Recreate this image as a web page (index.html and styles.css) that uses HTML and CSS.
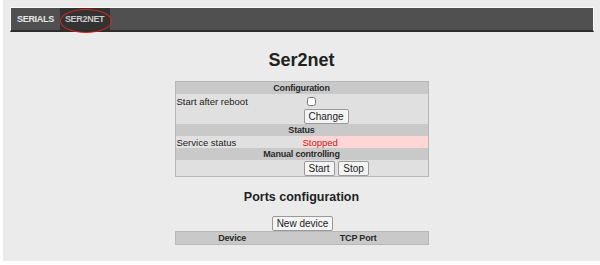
FILE: index.html
```html
<!DOCTYPE html>
<html lang="en">
<head>
    <meta charset="UTF-8">
    <title>Ser2net</title>
    <link rel="stylesheet" href="styles.css">
</head>
<body>
    <div class="page">
        <div class="menu">
            <a class="tab">SERIALS</a>
            <a class="tab active">SER2NET</a>
        </div>

        <h1>Ser2net</h1>
        <table class="grid">
            <tr><th colspan="2">Configuration</th></tr>
            <tr class="tall"><td class="label">Start after reboot</td><td><input type="checkbox" class="check"></td></tr>
            <tr><td></td><td><button>Change</button></td></tr>
            <tr><th colspan="2">Status</th></tr>
            <tr><td class="label">Service status</td><td class="stopped">Stopped</td></tr>
            <tr><th colspan="2">Manual controlling</th></tr>
            <tr><td></td><td><button>Start</button> <button>Stop</button></td></tr>
        </table>

        <h2>Ports configuration</h2>
        <div class="actions"><button>New device</button></div>
        <table class="grid ports">
            <tr><th class="dev">Device</th><th>TCP Port</th></tr>
        </table>
    </div>
</body>
</html>
```

FILE: styles.css
```css
body { margin: 0; background-color: #fff; font-family: "Liberation Sans", Arial, sans-serif; color: #222; }
.page { margin-left: 3px; height: 261px; background-color: #ebebeb; padding-top: 7px; box-sizing: border-box; overflow: hidden; }
.menu { display: flex; margin: 0 6px 0 7px; height: 25px; background-color: #505050; border: 1px solid #f8f8f8; border-bottom: 2px solid #2c2c2c; box-sizing: border-box; }
.tab { display: block; padding: 0 6px; line-height: 22px; font-size: 9px; font-weight: bold; color: #e8e8e8; letter-spacing: -0.3px; position: relative; }
.tab.active { background-color: #333; color: #ccc; padding: 0 6px 0 5px; }
.tab.active::after { content: ""; position: absolute; left: 0; right: -2px; top: 1px; bottom: -3px; border: 1.5px solid #d8241e; border-radius: 50%; }
h1 { text-align: center; font-size: 18px; margin: 18px 0 11px; line-height: 20px; }
h2 { text-align: center; font-size: 12.5px; margin: 12px 0 8px; line-height: 16px; }
.grid { width: 254px; margin: 0 auto; border-collapse: collapse; border: 1px solid #b8b8b8; background-color: #e0e0e0; font-size: 9.5px; }
.grid th { background-color: #c9c9c9; font-weight: bold; font-size: 9px; letter-spacing: -0.2px; height: 12px; padding: 0; line-height: 11px; color: #2a2a2a; }
.grid td { padding: 0 1px; height: 12px; line-height: 11px; }
.grid tr.tall td { height: 14px; }
.grid td.label { width: 124px; }
.stopped { background-color: #ffd6d6; color: #c02020; }
.check { margin: 1px 4px; width: 9px; height: 9px; vertical-align: middle; }
button { font-family: "Liberation Sans", Arial, sans-serif; font-size: 10px; padding: 1px 4px; margin: 1px 0 0 1px; background-color: #f4f4f4; border: 1px solid #999; border-radius: 2px; color: #222; height: 15px; line-height: 11px; }
.actions { text-align: center; }
.actions button { margin: 0 0 0 2px; display: inline-block; vertical-align: bottom; }
.ports th.dev { width: 45%; }
```
